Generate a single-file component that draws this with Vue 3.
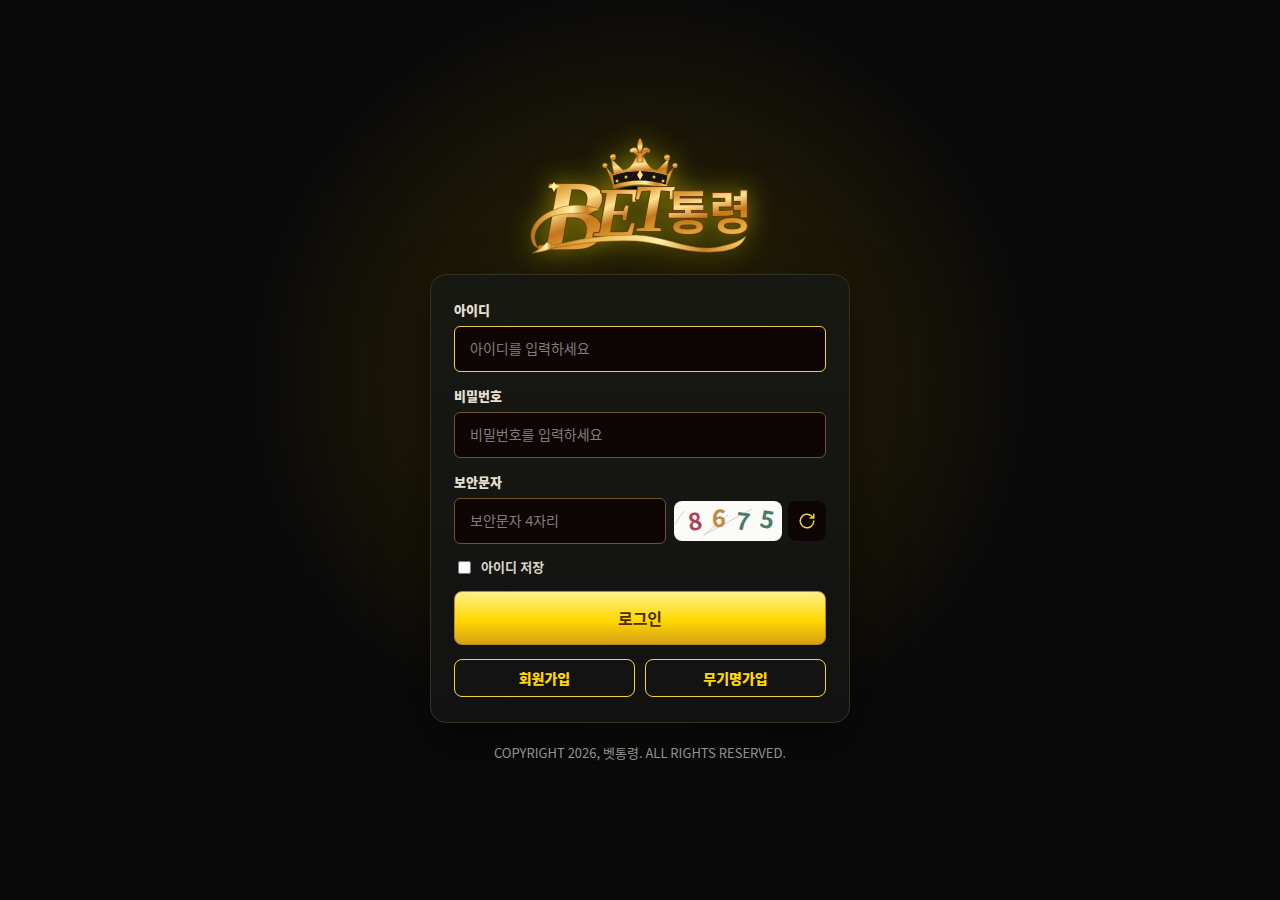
<template>
  <main class="login-page">
    <svg class="logo" viewBox="0 0 260 154" role="img" aria-label="BET통령">
      <defs>
        <linearGradient id="gold" x1="0" y1="0" x2="0.25" y2="1">
          <stop offset="0" stop-color="#f9dc87" />
          <stop offset="0.28" stop-color="#d8922a" />
          <stop offset="0.48" stop-color="#ffe491" />
          <stop offset="0.68" stop-color="#c5771b" />
          <stop offset="1" stop-color="#efb747" />
        </linearGradient>
        <linearGradient id="ribbon" x1="0" y1="0" x2="1" y2="0">
          <stop offset="0" stop-color="#b96f1c" />
          <stop offset="0.3" stop-color="#eebb51" />
          <stop offset="0.6" stop-color="#fff0a7" />
          <stop offset="0.8" stop-color="#c9831f" />
          <stop offset="1" stop-color="#ffd36b" />
        </linearGradient>
      </defs>

      <!-- crown -->
      <g fill="url(#gold)" stroke="#71400e" stroke-width="0.5">
        <path d="M96 47 104 56 101 38 113 50Q121 49 125 39L130 31 135 39Q139 49 147 50L159 38 156 56 164 47 157 65Q130 56 103 65Z" />
        <circle cx="95" cy="45.5" r="2.5" />
        <circle cx="103" cy="37" r="3" />
        <circle cx="157" cy="37.5" r="3" />
        <circle cx="165" cy="45.5" r="2.5" />
        <path d="M130 18Q125 24 129 33Q127 26 122 28Q118 30 121 33Q123 31 126 35L128 36 127 42H133L132 36 134 35Q137 31 139 33Q142 30 138 28Q133 26 131 33Q135 24 130 18Z" />
      </g>
      <path d="M102 55Q130 46 158 55L156 66Q130 58 104 66Z" fill="#17130f" stroke="#d8942c" />
      <path d="M103 65Q130 56 157 65V69Q130 60 103 69Z" fill="url(#ribbon)" />
      <path d="M103 70Q130 62 157 69Z" fill="#100b05" />
      <path d="M130 50 133 55 130 60 127 55Z" fill="#ffe08a" />
      <g fill="#eebb4a">
        <circle cx="107" cy="61" r="1.5" />
        <circle cx="116" cy="57" r="1.5" />
        <circle cx="144" cy="57" r="1.5" />
        <circle cx="153" cy="61" r="1.5" />
      </g>

      <!-- wordmark -->
      <g class="wordmark">
        <text class="latin" x="29" y="129" font-size="100">B</text>
        <text class="latin" x="84" y="116" font-size="70">E</text>
        <text class="latin" x="121" y="111" font-size="68">T</text>
        <text class="hangul" x="157" y="109" font-size="46">통령</text>
      </g>

      <!-- ribbon -->
      <g fill="url(#ribbon)" stroke="#8b5014" stroke-width="0.5">
        <path d="M90 89Q63 80 41 91C25 98 18 111 22 122Q24 127 28 128Q21 116 29 106C40 92 58 94 74 93Q84 92 90 89Z" />
        <path d="M22 133Q70 114 126 115C158 116 184 134 212 126Q228 123 236 116Q232 128 214 131C180 136 154 123 126 121Q76 119 22 133Z" />
        <path d="M22 133Q31 129 37 122L46 126Q36 132 22 133Z" />
      </g>
      <path d="M44 62 46 65 50 66 46 68 44 72 42 68 38 67 42 65Z" fill="#fff0a5" />
    </svg>

    <form class="card" @submit.prevent>
      <div class="field">
        <label for="user-id">아이디</label>
        <input id="user-id" v-model="userId" class="active" type="text" placeholder="아이디를 입력하세요" />
      </div>

      <div class="field">
        <label for="password">비밀번호</label>
        <input id="password" v-model="password" type="password" placeholder="비밀번호를 입력하세요" />
      </div>

      <div class="field">
        <label for="captcha">보안문자</label>
        <div class="captcha-row">
          <input id="captcha" v-model="captcha" type="text" maxlength="4" placeholder="보안문자 4자리" />
          <svg class="captcha" viewBox="0 0 108 40">
            <path d="M0 24 10 10M30 34 78 8M30 34 54 14" />
            <text x="14" y="29" fill="#ac4259" transform="rotate(-8 21 20)">8</text>
            <text x="38" y="26" fill="#c08b43" transform="rotate(3 45 17)">6</text>
            <text x="62" y="29" fill="#4b7d66" transform="rotate(8 69 20)">7</text>
            <text x="86" y="27" fill="#4b7d66" transform="rotate(9 92 18)">5</text>
          </svg>
          <button class="refresh" type="button" aria-label="새로고침">
            <svg viewBox="0 0 24 24">
              <path d="M21 12a9 9 0 1 1-3-6.7L21 8M21 3v5h-5" />
            </svg>
          </button>
        </div>
      </div>

      <label class="remember">
        <input v-model="remember" type="checkbox" />
        <span>아이디 저장</span>
      </label>

      <button class="login" type="submit">로그인</button>

      <div class="join">
        <button type="button">회원가입</button>
        <button type="button">무기명가입</button>
      </div>
    </form>

    <footer>COPYRIGHT 2026, 벳통령. ALL RIGHTS RESERVED.</footer>
  </main>
</template>

<script setup>
import { ref } from 'vue'

const userId = ref('')
const password = ref('')
const captcha = ref('')
const remember = ref(false)
</script>

<style>
body {
  margin: 0;
  background: #0a0a0a;
}
</style>

<style scoped>
.login-page {
  box-sizing: border-box;
  min-height: 100vh;
  display: flex;
  flex-direction: column;
  align-items: center;
  justify-content: center;
  background: radial-gradient(circle at 50% 42%, #2a2405 0, #1b1706 230px, #0a0a0a 385px);
  font-family: "Noto Sans", "Noto Sans CJK KR", sans-serif;
}

.logo {
  width: 260px;
  height: 154px;
  overflow: visible;
  filter: drop-shadow(0 0 12px rgba(200, 190, 0, 0.6));
}

.wordmark {
  fill: url(#gold);
  stroke: #6b390b;
  stroke-width: 2px;
  paint-order: stroke;
}

.latin {
  font-family: "Liberation Serif", serif;
  font-style: italic;
  font-weight: 700;
}

.hangul {
  font-family: "Noto Sans CJK KR", sans-serif;
  font-weight: 700;
}

.card {
  box-sizing: border-box;
  width: 100%;
  max-width: 420px;
  display: flex;
  flex-direction: column;
  gap: 14px;
  padding: 25px 23px;
  border: 1px solid #38321c;
  border-radius: 16px;
  background: linear-gradient(#181813, #121212);
  box-shadow: 0 20px 50px rgba(0, 0, 0, 0.5);
}

.field {
  display: flex;
  flex-direction: column;
  gap: 6px;
}

.field label {
  color: #e5dfcf;
  font-size: 13px;
  font-weight: 800;
  line-height: 20px;
}

.field input {
  box-sizing: border-box;
  width: 100%;
  height: 46px;
  padding: 0 15px 1px;
  border: 1px solid #70532a;
  border-radius: 6px;
  outline: none;
  background: #0d0604;
  color: #fff;
  font-family: inherit;
  font-size: 14px;
}

.field input.active {
  border-color: #f0cf43;
}

.field input::placeholder {
  color: #827d7a;
}

.captcha-row {
  display: flex;
  align-items: center;
  gap: 6px;
}

.captcha-row input {
  flex: 1;
  min-width: 0;
  margin-right: 2px;
}

.captcha {
  width: 108px;
  height: 40px;
  overflow: visible;
  border-radius: 8px;
  background: #fcfbf7;
  font-family: "Noto Sans CJK KR", sans-serif;
  font-size: 24px;
  font-weight: 700;
}

.captcha path {
  fill: none;
  stroke: #d2d0ce;
}

.refresh {
  display: flex;
  align-items: center;
  justify-content: center;
  width: 38px;
  height: 40px;
  padding: 0;
  border: 0;
  border-radius: 8px;
  background: #0d0604;
}

.refresh svg {
  width: 18px;
  height: 18px;
  fill: none;
  stroke: #f5cf4b;
  stroke-width: 2;
  stroke-linecap: round;
  stroke-linejoin: round;
}

.remember {
  display: flex;
  align-items: center;
  gap: 10px;
  padding-left: 4px;
  color: #d9d4c7;
  font-size: 13px;
  font-weight: 600;
  line-height: 19px;
}

.remember input {
  width: 13px;
  height: 13px;
  margin: 0;
}

.login {
  height: 54px;
  border: 1px solid #b5872b;
  border-radius: 8px;
  background: linear-gradient(#fff08a, #ffd700 55%, #d4a017);
  color: #4a2c0a;
  font-family: inherit;
  font-size: 16px;
  font-weight: 700;
}

.join {
  display: grid;
  grid-template-columns: 1fr 1fr;
  gap: 10px;
}

.join button {
  height: 38px;
  border: 1px solid #f5d535;
  border-radius: 8px;
  background: transparent;
  color: #ffd700;
  font-family: inherit;
  font-size: 14px;
  font-weight: 800;
}

button {
  cursor: pointer;
}

footer {
  margin-top: 20px;
  padding-bottom: 17px;
  color: #929292;
  font-family: "Noto Sans CJK KR", sans-serif;
  font-size: 13px;
  line-height: 20px;
  text-align: center;
}
</style>
